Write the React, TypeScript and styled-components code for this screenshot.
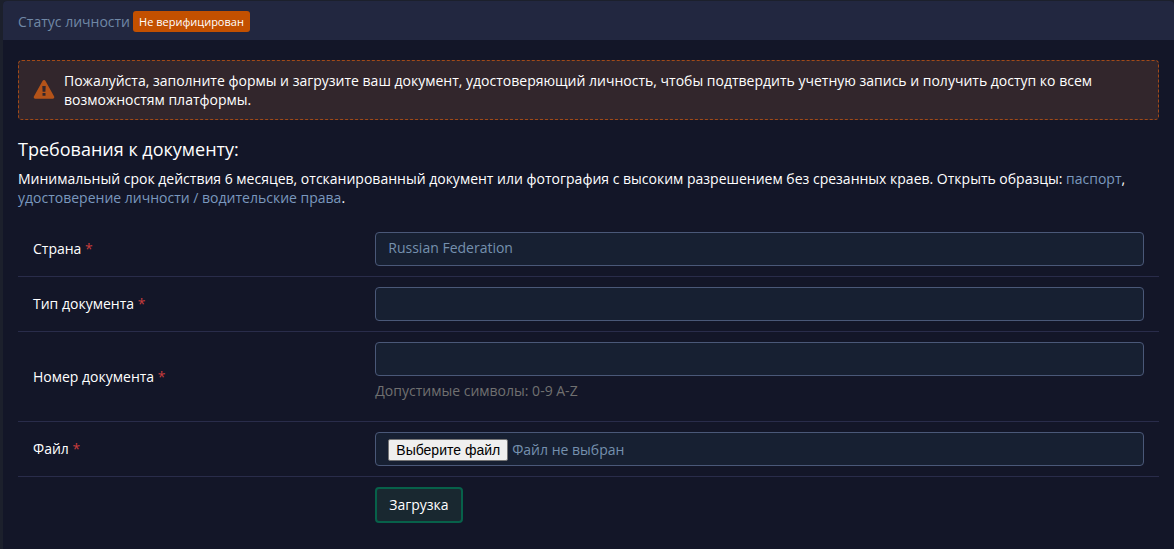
import React from 'react';
import styled, { createGlobalStyle, css } from 'styled-components';

const GlobalStyle = createGlobalStyle`
  *, *::before, *::after { box-sizing: border-box; }
  body {
    margin: 0;
    background: #1c202c;
    color: #fff;
    font: 14px/19px "Open Sans", "Noto Sans", sans-serif;
  }
`;

const Page = styled.main`
  padding: 1px 0 1px 3px;
`;

const Panel = styled.section`
  background: #131628;
  border-radius: 4px 4px 0 0;
`;

const PanelHeader = styled.header`
  display: flex;
  align-items: center;
  gap: 3px;
  height: 39px;
  padding: 2px 15px 0;
  background: #222740;
  border-radius: 4px 4px 0 0;
  color: #7088a6;
`;

const Badge = styled.span`
  padding: 0 6px;
  border-radius: 3px;
  background: #c35000;
  color: #fff;
  font-size: 11px;
  line-height: 21px;
`;

const PanelBody = styled.div`
  padding: 20px 15px 25px;
`;

const Alert = styled.div`
  display: flex;
  align-items: center;
  gap: 9px;
  padding: 10px 14px;
  border: 1px dashed #a24a18;
  border-radius: 4px;
  background: #32262c;

  svg {
    flex: none;
    display: block;
  }
  p { margin: 0; }
`;

const Title = styled.h1`
  margin: 17px 0 8px;
  font-size: 18px;
  font-weight: 400;
  line-height: 24px;
`;

const Requirements = styled.p`
  margin: 0 0 15px;
`;

const Link = styled.a`
  color: #7a98be;
  text-decoration: none;
`;

const Row = styled.div<{ $last?: boolean }>`
  display: grid;
  grid-template-columns: 30% 1fr;
  align-items: center;
  padding: 10px 0;
  border-bottom: ${({ $last }) => ($last ? 'none' : '1px solid #292c4a')};
`;

const Label = styled.label`
  padding: 0 15px 1px;
`;

const Star = styled.span`
  color: #c93c3c;
`;

const Cell = styled.div`
  grid-column: 2;
  padding: 0 15px;
`;

const control = css`
  display: block;
  width: 100%;
  height: 34px;
  margin: 0;
  padding: 0 12px 3px;
  border: 1px solid #4a5878;
  border-radius: 4px;
  background: #172032;
  color: #7590ae;
  font: inherit;
`;

const Select = styled.select`
  ${control}
  appearance: none;
`;

const TextInput = styled.input`
  ${control}
`;

const FileControl = styled.label`
  ${control}
  display: flex;
  align-items: center;
  gap: 4px;
  padding: 2px 12px 0;
  position: relative;
`;

const FileInput = styled.input`
  position: absolute;
  inset: 0;
  width: 100%;
  opacity: 0;
`;

const FileButton = styled.span`
  padding: 0 7px;
  border: 1px solid #767676;
  border-radius: 2px;
  background: #efefef;
  color: #000;
  font-family: "Liberation Sans", Arial, sans-serif;
  line-height: 20px;
`;

const FileName = styled.span`
  padding-bottom: 2px;
`;

const Hint = styled.p`
  margin: 5px 0 10px;
  line-height: 20px;
  color: #707070;
`;

const SubmitButton = styled.button`
  display: block;
  height: 36px;
  padding: 0 12px 2px;
  border: 2px solid #07614a;
  border-radius: 4px;
  background: #192830;
  color: #fff;
  font: inherit;
`;

const WarningIcon = () => (
  <svg width="22" height="20" viewBox="0 0 22 20" aria-hidden="true">
    <path
      fill="#b45319"
      fillRule="evenodd"
      d="M9.5 .9a1.7 1.7 0 0 1 3 0l8.5 15.3a1.6 1.6 0 0 1-1.4 2.5H2.4a1.6 1.6 0 0 1-1.4-2.5ZM9.3 6.1l.3 5.6h2.8l.3-5.6ZM9.5 13v2.8h3V13Z"
    />
  </svg>
);

const FieldLabel = ({ htmlFor, text }: { htmlFor: string; text: string }) => (
  <Label htmlFor={htmlFor}>
    {text} <Star>*</Star>
  </Label>
);

export default function App() {
  return (
    <>
      <GlobalStyle />
      <Page>
        <Panel>
          <PanelHeader>
            <span>Статус личности</span>
            <Badge>Не верифицирован</Badge>
          </PanelHeader>
          <PanelBody>
            <Alert role="alert">
              <WarningIcon />
              <p>
                Пожалуйста, заполните формы и загрузите ваш документ, удостоверяющий личность, чтобы
                подтвердить учетную запись и получить доступ ко всем возможностям платформы.
              </p>
            </Alert>
            <Title>Требования к документу:</Title>
            <Requirements>
              Минимальный срок действия 6 месяцев, отсканированный документ или фотография с высоким
              разрешением без срезанных краев. Открыть образцы: <Link href="#passport">паспорт</Link>,{' '}
              <Link href="#id-card">удостоверение личности / водительские права</Link>.
            </Requirements>
            <form onSubmit={(event) => event.preventDefault()}>
              <Row>
                <FieldLabel htmlFor="country" text="Страна" />
                <Cell>
                  <Select id="country" defaultValue="RU">
                    <option value="RU">Russian Federation</option>
                  </Select>
                </Cell>
              </Row>
              <Row>
                <FieldLabel htmlFor="doc-type" text="Тип документа" />
                <Cell>
                  <Select id="doc-type" defaultValue="">
                    <option value="" />
                  </Select>
                </Cell>
              </Row>
              <Row>
                <FieldLabel htmlFor="doc-number" text="Номер документа" />
                <Cell>
                  <TextInput id="doc-number" type="text" aria-describedby="doc-number-hint" />
                  <Hint id="doc-number-hint">Допустимые символы: 0-9 A-Z</Hint>
                </Cell>
              </Row>
              <Row>
                <FieldLabel htmlFor="file" text="Файл" />
                <Cell>
                  <FileControl>
                    <FileInput id="file" type="file" />
                    <FileButton>Выберите файл</FileButton>
                    <FileName>Файл не выбран</FileName>
                  </FileControl>
                </Cell>
              </Row>
              <Row $last>
                <Cell>
                  <SubmitButton type="submit">Загрузка</SubmitButton>
                </Cell>
              </Row>
            </form>
          </PanelBody>
        </Panel>
      </Page>
    </>
  );
}
